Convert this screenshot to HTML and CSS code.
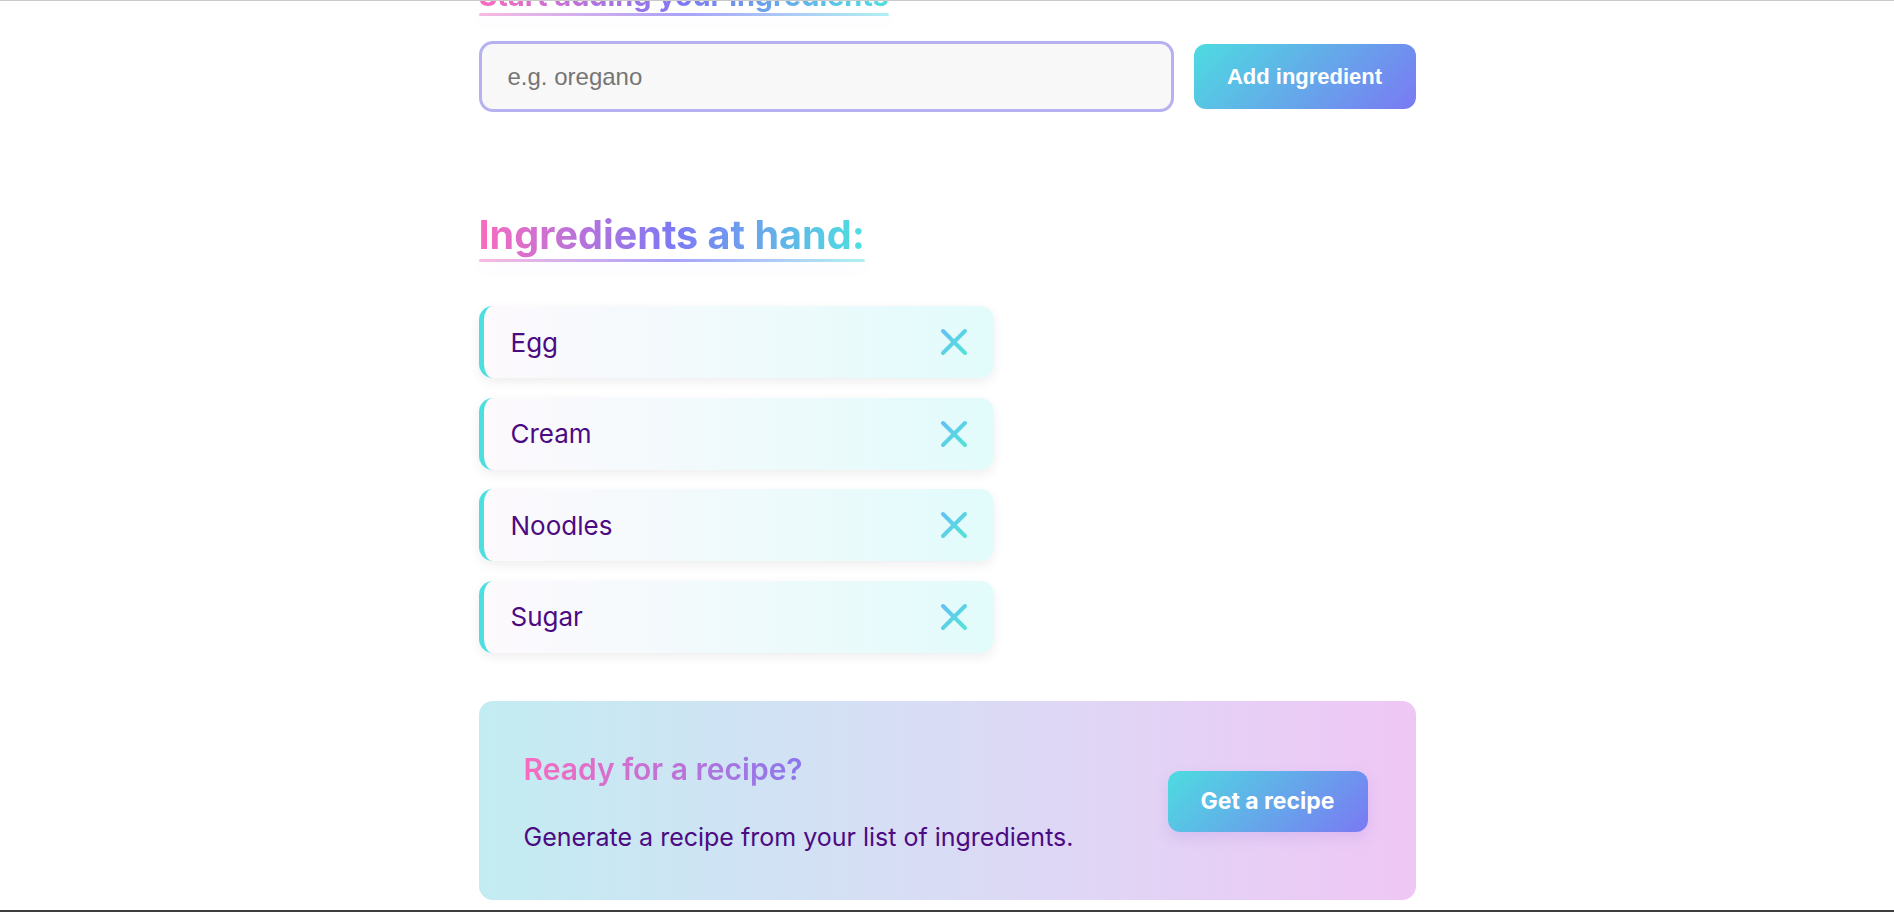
FILE: index.html
```html
<!DOCTYPE html>
<html lang="en">
<head>
<meta charset="utf-8">
<title>Chef Claude</title>
<link rel="stylesheet" href="styles.css">
</head>
<body>
<main class="page">
  <h2 class="fancy-heading fancy-heading--small">
    <span class="fancy-heading__text">Start adding your ingredients</span>
    <span class="fancy-heading__line"></span>
  </h2>

  <form class="add-form">
    <input class="add-form__input" type="text" placeholder="e.g. oregano" aria-label="Add ingredient">
    <button class="add-form__button" type="button">Add ingredient</button>
  </form>

  <section class="ingredients">
    <h2 class="fancy-heading fancy-heading--large">
      <span class="fancy-heading__text">Ingredients at hand:</span>
      <span class="fancy-heading__line"></span>
    </h2>

    <ul class="ingredient-list">
      <li class="ingredient">
        <span class="ingredient__name">Egg</span>
        <button class="ingredient__remove" type="button" aria-label="Remove Egg">
          <svg width="28" height="28" viewBox="0 0 28 28"><defs><linearGradient id="xg1" x1="0" y1="0" x2="1" y2="1"><stop offset="0" stop-color="#62c2f4"/><stop offset="1" stop-color="#55e2d6"/></linearGradient></defs><path d="M3 3 L25 25 M25 3 L3 25" stroke="url(#xg1)" stroke-width="4" stroke-linecap="round" fill="none"/></svg>
        </button>
      </li>
      <li class="ingredient">
        <span class="ingredient__name">Cream</span>
        <button class="ingredient__remove" type="button" aria-label="Remove Cream">
          <svg width="28" height="28" viewBox="0 0 28 28"><path d="M3 3 L25 25 M25 3 L3 25" stroke="url(#xg1)" stroke-width="4" stroke-linecap="round" fill="none"/></svg>
        </button>
      </li>
      <li class="ingredient">
        <span class="ingredient__name">Noodles</span>
        <button class="ingredient__remove" type="button" aria-label="Remove Noodles">
          <svg width="28" height="28" viewBox="0 0 28 28"><path d="M3 3 L25 25 M25 3 L3 25" stroke="url(#xg1)" stroke-width="4" stroke-linecap="round" fill="none"/></svg>
        </button>
      </li>
      <li class="ingredient">
        <span class="ingredient__name">Sugar</span>
        <button class="ingredient__remove" type="button" aria-label="Remove Sugar">
          <svg width="28" height="28" viewBox="0 0 28 28"><path d="M3 3 L25 25 M25 3 L3 25" stroke="url(#xg1)" stroke-width="4" stroke-linecap="round" fill="none"/></svg>
        </button>
      </li>
    </ul>

    <div class="recipe-cta">
      <div class="recipe-cta__text">
        <h3 class="recipe-cta__title">Ready for a recipe?</h3>
        <p class="recipe-cta__desc">Generate a recipe from your list of ingredients.</p>
      </div>
      <button class="recipe-cta__button" type="button">Get a recipe</button>
    </div>
  </section>
</main>
</body>
</html>
```

FILE: styles.css
```css
* {
  box-sizing: border-box;
}

html, body {
  margin: 0;
  background: #ffffff;
}

body {
  font-family: "Inter", "Noto Sans", sans-serif;
  overflow: hidden;
}

body::before {
  content: "";
  position: fixed;
  left: 0;
  right: 0;
  top: 0;
  height: 1px;
  background: #c9c9c9;
  z-index: 10;
}

body::after {
  content: "";
  position: fixed;
  left: 0;
  right: 0;
  bottom: 0;
  height: 2px;
  background: #3d3d3d;
  z-index: 10;
}

.page {
  max-width: 937px;
  margin: -22px auto 0;
}

/* gradient headings */
.fancy-heading {
  display: inline-flex;
  flex-direction: column;
  margin: 0;
  font-weight: 700;
  line-height: normal;
}

.fancy-heading--small {
  font-size: 28.8px;
}

.fancy-heading--large {
  font-size: 39.6px;
}

.fancy-heading__text {
  background: linear-gradient(90deg, #f86cbe 0%, #7e79f4 50%, #4de0e0 100%);
  -webkit-background-clip: text;
  background-clip: text;
  color: transparent;
}

.fancy-heading__line {
  display: block;
  height: 3px;
  border-radius: 2px;
  background: linear-gradient(90deg, #f9b9e0 0%, #a9a3f9 50%, #aff0f2 100%);
  box-shadow: 0 6px 12px rgba(140, 120, 240, 0.08);
}

/* form */
.add-form {
  display: flex;
  align-items: center;
  gap: 20px;
  margin-top: 25px;
}

.add-form__input {
  flex: 1;
  height: 71px;
  border: 3px solid #b6b1f1;
  border-radius: 14px;
  background: #f8f8f8;
  padding: 0 26px;
  font-family: "Liberation Sans", Arial, sans-serif;
  font-size: 24px;
  color: #333;
  outline: none;
}

.add-form__input::placeholder {
  color: #757575;
}

.add-form__button {
  width: 222px;
  height: 65px;
  border: none;
  border-radius: 12px;
  background: linear-gradient(135deg, #4ddce0 0%, #7a79f3 100%);
  color: #ffffff;
  font-family: "Liberation Sans", Arial, sans-serif;
  font-weight: 700;
  font-size: 22px;
}

/* ingredients */
.ingredients {
  margin-top: 99px;
}

.ingredient-list {
  list-style: none;
  margin: 44px 0 0;
  padding: 0;
  width: 515px;
  display: flex;
  flex-direction: column;
  gap: 19.5px;
}

.ingredient {
  height: 72px;
  display: flex;
  align-items: center;
  justify-content: space-between;
  padding: 0 26px 0 27px;
  border-left: 5px solid #4ddfe0;
  border-radius: 14px;
  background: linear-gradient(90deg, #fdf9fd 0%, #e2fbfb 100%);
  box-shadow: 0 4px 12px rgba(0, 0, 0, 0.07);
}

.ingredient__name {
  font-size: 26px;
  color: #4c0a83;
}

.ingredient__remove {
  display: flex;
  padding: 0;
  border: none;
  background: none;
}

/* recipe call to action */
.recipe-cta {
  margin-top: 48px;
  display: flex;
  align-items: center;
  gap: 24px;
  padding: 50px 48px 48px 45px;
  border-radius: 14px;
  background: linear-gradient(90deg, #c3ecf2 0%, #d9dcf5 50%, #efc7f5 100%);
}

.recipe-cta__text {
  flex: 1;
}

.recipe-cta__title {
  margin: 0;
  font-size: 30px;
  font-weight: 600;
  line-height: normal;
  background: linear-gradient(90deg, #f86cbe 0%, #7e79f4 50%, #4de0e0 100%);
  -webkit-background-clip: text;
  background-clip: text;
  color: transparent;
}

.recipe-cta__desc {
  margin: 35px 0 0;
  font-size: 25px;
  line-height: normal;
  color: #4c0a83;
}

.recipe-cta__button {
  width: 200px;
  height: 61px;
  border: none;
  border-radius: 12px;
  background: linear-gradient(135deg, #4ddce0 0%, #7a79f3 100%);
  color: #ffffff;
  font-family: "Inter", sans-serif;
  font-weight: 700;
  font-size: 23px;
  box-shadow: 0 6px 14px rgba(150, 110, 220, 0.18);
}
```
